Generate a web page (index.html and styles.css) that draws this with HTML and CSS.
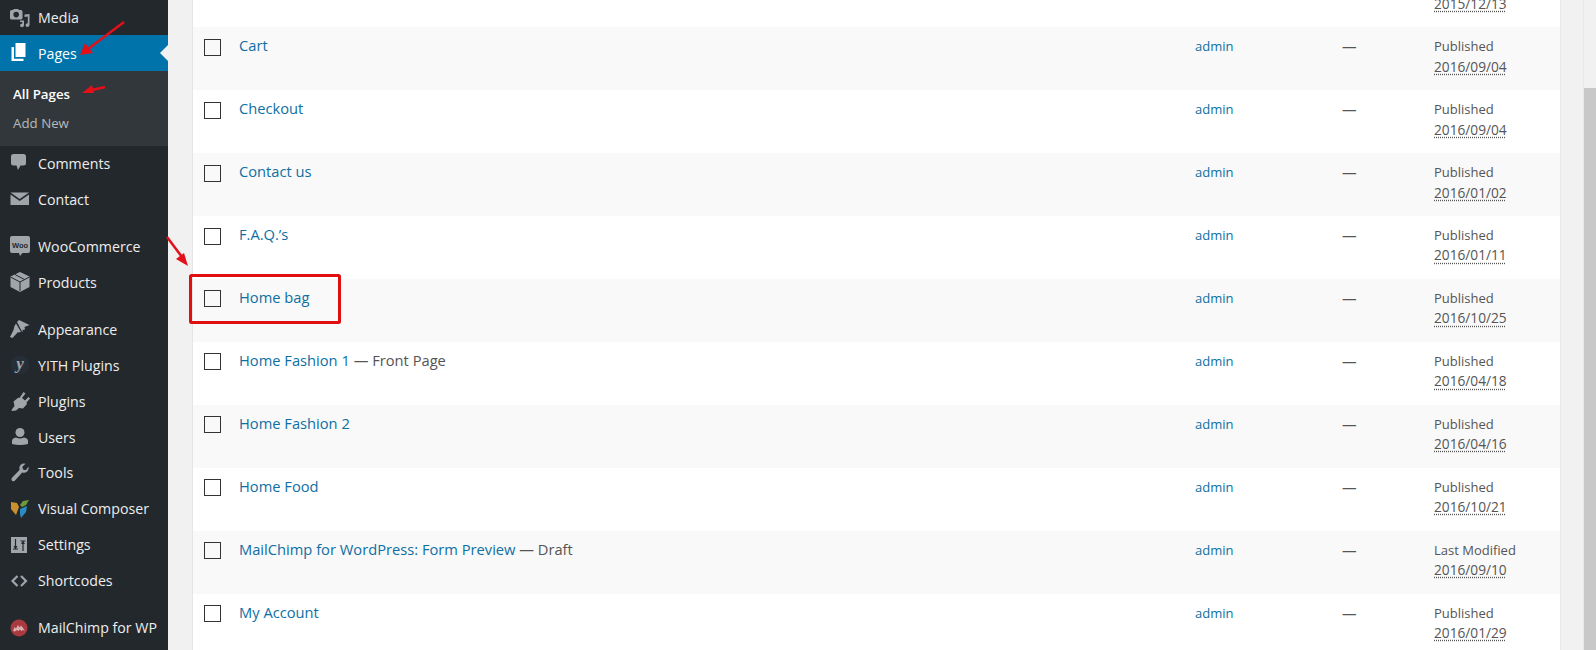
FILE: index.html
```html
<!DOCTYPE html>
<html lang="en">
<head>
<meta charset="utf-8">
<title>Pages</title>
<link rel="stylesheet" href="styles.css">
</head>
<body>
<div class="app">
  <nav class="side">
    <a class="item first"><svg class="ic" viewBox="0 0 20 20"><path d="M0 3.500Q0 2 1.500 2H3l1-1h4l1 1h2Q12.500 2 12.500 3.500V10q0 1.500-1.500 1.500H1.500Q0 11.500 0 10zM6.200 3.800a2.800 2.800 0 1 0 0 5.600 2.800 2.800 0 0 0 0-5.600z"/><path d="M14.500 6.500l5-.5v11q-.2 2-2 2-2-.1-2-1.800 0-1.700 2.300-1.900V8.500l-3.300.5zM10 12.500h4v4.800q-.2 2-2 2t-2-1.700q0-1.800 2.300-2v-1.500H10z"/></svg><span>Media</span></a>
    <a class="item active"><svg class="ic" viewBox="0 0 20 20"><path d="M5.500 0h10v14h-10z"/><path d="M1.500 4h2.500v-.2v12h9.500V18H1.500z"/></svg><span>Pages</span></a>
    <div class="sub">
      <a class="sub-item current">All Pages</a>
      <a class="sub-item">Add New</a>
    </div>
    <a class="item"><svg class="ic" viewBox="0 0 20 20"><path d="M3.500 1h10Q16 1 16 3.500v6.500Q16 12.500 13.500 12.500H10.500l-2.500 4.500-1.500-4.500H3.500Q1 12.500 1 10V3.500Q1 1 3.500 1z"/></svg><span>Comments</span></a>
    <a class="item"><svg class="ic" viewBox="0 0 20 20"><path d="M.5 3.500h18.500l-9.300 6.500z"/><path d="M.5 5.500l9.200 6.500L19 5.500v10.500H.5z"/></svg><span>Contact</span></a>
    <a class="item gap"><svg class="ic" viewBox="0 0 20 20"><path d="M2 0h16q2 0 2 2v13q0 2-2 2h-5.500L10 20l-1-3H2q-2 0-2-2V2q0-2 2-2z"/><text class="woo" x="10" y="11.500" text-anchor="middle">Woo</text></svg><span>WooCommerce</span></a>
    <a class="item"><svg class="ic" viewBox="0 0 20 20"><path d="M10 0l9.500 4.500v10.500L10 20 .5 15V4.500z"/><path class="cut" d="M.5 5l9.500 5 9.500-5M10 10v9M5 2.500l9.500 5"/></svg><span>Products</span></a>
    <a class="item gap"><svg class="ic" viewBox="0 0 20 20"><path d="M7 3L9 1l10.500 5-5 2 .5 2.500-2.500.5V13.500z"/><path d="M6 4.500L11 13l-3.500.5-5 5.500L0 18l3.500-7 1-4z"/></svg><span>Appearance</span></a>
    <a class="item"><svg class="ic" viewBox="0 0 20 20"><circle class="halo" cx="10" cy="10" r="9.500"/><text class="yith" x="10" y="14" text-anchor="middle">y</text></svg><span>YITH Plugins</span></a>
    <a class="item"><svg class="ic" viewBox="0 0 20 20"><path d="M13.500 1l2 1.500L12 7l3 2.500L18.500 6l1.500 1.500-3.500 4 .5 1.500-4 4.500-4-.5L6 19.500 2 20l-.5-1 3-4-1-4.500L8.500 6.500l1 .5z"/></svg><span>Plugins</span></a>
    <a class="item"><svg class="ic" viewBox="0 0 20 20"><circle cx="10" cy="5.500" r="4.500"/><path d="M2 17v-3q0-3 4-3.500 4 2 8 0 4 .5 4 3.500v3q-8 2-16 0z"/></svg><span>Users</span></a>
    <a class="item"><svg class="ic" viewBox="0 0 20 20"><path d="M18.500 3.500q.8 3-1.300 5-2.300 2-5 1L5 17.500q-1.500 1.500-3 .2-1.300-1.500 0-3l7.500-7.600q-1-3 1-5 2-2 5-1.300l-3.200 3 .7 2.700 2.800.8z"/></svg><span>Tools</span></a>
    <a class="item"><svg class="ic" viewBox="0 0 20 20"><path class="vc-o" d="M1 3l6 1 2 4-3 8-5-6z"/><path class="vc-g" d="M10 6l3-4 6-1-3 5-4 2z"/><path class="vc-b" d="M10 10l7-3-1 6-5 6-1-4z"/></svg><span>Visual Composer</span></a>
    <a class="item"><svg class="ic" viewBox="0 0 20 20"><path d="M1 2h16v16H1z"/><path class="cut thin" d="M5.500 4v7M13 9v7M3 14h5M10.500 6h5"/><path class="cut-fill" d="M3.500 11h4L5.500 14.500zM11 9h4l-2-3.500z"/></svg><span>Settings</span></a>
    <a class="item"><svg class="ic line" viewBox="0 0 20 20"><path d="M7.500 5L2.500 10l5 5M11 5l5 5-5 5"/></svg><span>Shortcodes</span></a>
    <a class="item gap"><svg class="ic" viewBox="0 0 20 20"><circle class="mc-c" cx="9" cy="10" r="8.500"/><path class="mc-m" d="M3 13l1.500-4 1.500 1.500L8 7l1.500 2.500L11 7.500l2 2.500 2 3-2-1-1.500 1L10 11.500 8.500 13 7 12l-2 1.500z"/></svg><span>MailChimp for WP</span></a>
  </nav>

  <main class="main">
    <div class="table">
      <div class="row"><div class="cb"></div><div class="title"></div><div class="author"></div><div class="dash"></div><div class="date"><br><abbr>2015/12/13</abbr></div></div>
      <div class="row alt"><div class="cb"></div><div class="title"><a>Cart</a></div><a class="author">admin</a><div class="dash">—</div><div class="date">Published<br><abbr>2016/09/04</abbr></div></div>
      <div class="row"><div class="cb"></div><div class="title"><a>Checkout</a></div><a class="author">admin</a><div class="dash">—</div><div class="date">Published<br><abbr>2016/09/04</abbr></div></div>
      <div class="row alt"><div class="cb"></div><div class="title"><a>Contact us</a></div><a class="author">admin</a><div class="dash">—</div><div class="date">Published<br><abbr>2016/01/02</abbr></div></div>
      <div class="row"><div class="cb"></div><div class="title"><a>F.A.Q.’s</a></div><a class="author">admin</a><div class="dash">—</div><div class="date">Published<br><abbr>2016/01/11</abbr></div></div>
      <div class="row alt"><div class="cb"></div><div class="title"><a>Home bag</a></div><a class="author">admin</a><div class="dash">—</div><div class="date">Published<br><abbr>2016/10/25</abbr></div></div>
      <div class="row"><div class="cb"></div><div class="title"><a>Home Fashion 1</a> — Front Page</div><a class="author">admin</a><div class="dash">—</div><div class="date">Published<br><abbr>2016/04/18</abbr></div></div>
      <div class="row alt"><div class="cb"></div><div class="title"><a>Home Fashion 2</a></div><a class="author">admin</a><div class="dash">—</div><div class="date">Published<br><abbr>2016/04/16</abbr></div></div>
      <div class="row"><div class="cb"></div><div class="title"><a>Home Food</a></div><a class="author">admin</a><div class="dash">—</div><div class="date">Published<br><abbr>2016/10/21</abbr></div></div>
      <div class="row alt"><div class="cb"></div><div class="title"><a>MailChimp for WordPress: Form Preview</a> — Draft</div><a class="author">admin</a><div class="dash">—</div><div class="date">Last Modified<br><abbr>2016/09/10</abbr></div></div>
      <div class="row"><div class="cb"></div><div class="title"><a>My Account</a></div><a class="author">admin</a><div class="dash">—</div><div class="date">Published<br><abbr>2016/01/29</abbr></div></div>
    </div>
  </main>

  <div class="scrollbar"><div class="thumb"></div></div>

  <svg class="marks" viewBox="0 0 1596 650" width="1596" height="650">
    <path class="shaft" d="M124 22L88 49"/><path class="head" d="M80 55l5-12 8 10z"/>
    <path class="shaft" d="M105 87L92 90"/><path class="head" d="M82 93l10-8 2 8z"/>
    <path class="shaft" d="M167 237l15 20"/><path class="head" d="M188 266l-12-7 8-6z"/>
    <rect class="box" x="190.500" y="275.500" width="149" height="47" rx="1"/>
  </svg>
</div>
</body>
</html>
```

FILE: styles.css
```css
* { box-sizing: border-box; }
html, body { margin: 0; height: 650px; overflow: hidden; }
body { background: #f1f1f1; font-family: "Open Sans", "Liberation Sans", sans-serif; font-size: 13px; color: #555; }
.app { position: relative; display: flex; width: 1596px; height: 650px; overflow: hidden; }

.side { flex: 0 0 168px; background: #23282d; color: #eee; font-size: 14.200px; }
.item { display: flex; align-items: center; height: 35.900px; padding-left: 10px; position: relative; }
.item.first { height: 35px; }
.item.gap { margin-top: 11.200px; }
.item .ic { flex: 0 0 20px; width: 20px; height: 20px; fill: #a0a5aa; margin-right: 8px; }
.item.active { background: #0073aa; color: #fff; height: 36px; }
.item.active .ic { fill: #fff; }
.item.active::after { content: ""; position: absolute; right: 0; top: 10px; border: 8px solid transparent; border-right-color: #f1f1f1; border-left-width: 0; }
.sub { background: #32373c; height: 74.500px; padding: 8.500px 0 7px 13px; font-size: 13.300px; }
.sub-item { display: block; height: 29.500px; line-height: 29.500px; color: #b4b9be; }
.sub-item.current { color: #fff; font-weight: 600; }
.item .line { fill: none; stroke: #a0a5aa; stroke-width: 2.200px; }
.cut { fill: none; stroke: #23282d; stroke-width: 1px; }
.cut.thin { stroke-width: 1.200px; }
.cut-fill { fill: #23282d; }
.woo { font: 700 7.500px "Liberation Sans", sans-serif; fill: #23282d; }
.yith { font: italic 700 17px "Liberation Serif", serif; fill: #a0a5aa; }
.halo { fill: #262e37; }
.vc-o { fill: #c9902b; }
.vc-g { fill: #6e9a3a; }
.vc-b { fill: #2a8cc4; }
.mc-c { fill: #a83a40; }
.mc-m { fill: #dcb0b0; }

.main { flex: 1 1 auto; padding: 0 22px 0 24px; min-width: 0; }
.table { margin-top: -35.800px; background: #fff; border-left: 1px solid #e5e5e5; border-right: 1px solid #e9e9e9; }
.row { display: grid; grid-template-columns: 35px 956px 147px 92px 1fr; height: 62.950px; padding: 9px 0 0 11px; background: #fff; }
.row.alt { background: #f9f9f9; }
.cb { width: 17px; height: 17px; margin-top: 2.600px; border: 1.500px solid #333; }
.title { font-size: 14.700px; line-height: 19.800px; color: #555; }
.title a { color: #0f6fa3; }
.author { color: #0f6fa3; line-height: 20.500px; }
.dash { color: #555; font-size: 14.600px; line-height: 20.500px; }
.date { color: #555; line-height: 20.500px; }
abbr { font-size: 13.700px; text-decoration: underline dotted #555; text-underline-offset: 2px; }

.scrollbar { flex: 0 0 13px; height: 650px; background: #f1f1f1; border-left: 1px solid #e8e8e8; padding-top: 88px; }
.thumb { height: 562px; background: #c8c8c8; }

.marks { position: absolute; left: 0; top: 0; pointer-events: none; }
.shaft { fill: none; stroke: #e3101a; stroke-width: 2.500px; }
.head { fill: #e3101a; }
.box { fill: none; stroke: #e01010; stroke-width: 3px; }
```
